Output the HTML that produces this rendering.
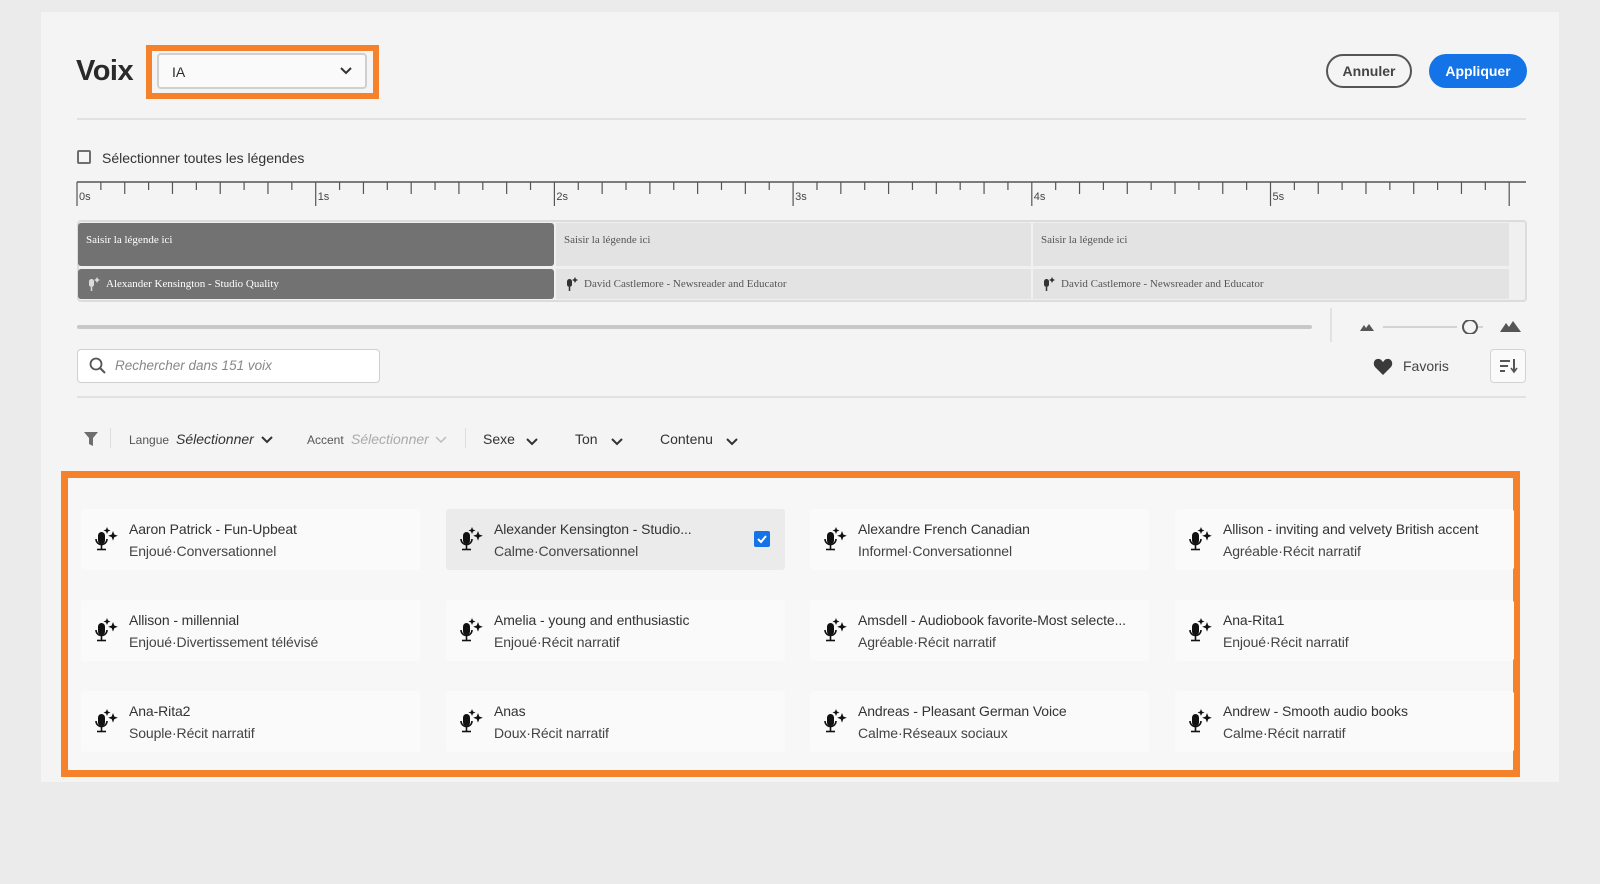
<!DOCTYPE html>
<html><head><meta charset="utf-8"><style>
*{box-sizing:border-box;margin:0;padding:0}
body{width:1600px;height:884px;background:#ebebeb;font-family:"Liberation Sans",sans-serif;color:#2c2c2c;position:relative;overflow:hidden}
.a{position:absolute}
.panel{left:41px;top:12px;width:1518px;height:770px;background:#f4f4f4}
.t{white-space:nowrap}
.seg{position:absolute;font-family:"Liberation Serif",serif;font-size:11px;padding-left:8px}
.card{position:absolute;width:339px;height:61px;background:#fafafa;border-radius:3px}
.card .n{position:absolute;left:48px;top:12px;font-size:14px;color:#333;white-space:nowrap;letter-spacing:-0.1px}
.card .s{position:absolute;left:48px;top:34px;font-size:14px;color:#444;white-space:nowrap;letter-spacing:-0.1px}
.card svg{position:absolute;left:14px;top:17px}
.chev{position:absolute}
</style></head><body>
<div class="a panel"></div>
<div class="a t" style="left:76px;top:55px;font-size:29px;font-weight:bold;color:#2a2a2a;letter-spacing:-0.5px">Voix</div>
<div class="a" style="left:146px;top:45px;width:233px;height:54px;border:6px solid #f5822a"></div>
<div class="a" style="left:157px;top:53px;width:210px;height:36px;background:#fafafa;border:2px solid #d0d0d0;border-radius:4px"></div>
<div class="a t" style="left:172px;top:64px;font-size:14px">IA</div>
<svg class="a" style="left:340px;top:67px" width="12" height="8"><path d="M1 1l5 5 5-5" stroke="#333" stroke-width="2" fill="none"/></svg>
<div class="a" style="left:1326px;top:54px;width:86px;height:34px;border:2px solid #555;border-radius:17px;font-size:14px;font-weight:bold;color:#444;text-align:center;line-height:30px">Annuler</div>
<div class="a" style="left:1429px;top:54px;width:98px;height:34px;background:#1473e6;border-radius:17px;font-size:14px;font-weight:bold;color:#fff;text-align:center;line-height:34px">Appliquer</div>
<div class="a" style="left:77px;top:118px;width:1449px;height:2px;background:#e1e1e1"></div>
<div class="a" style="left:77px;top:150px;width:14px;height:14px;border:2px solid #6e6e6e;border-radius:2px"></div>
<div class="a t" style="left:102px;top:150px;font-size:14px;color:#333">Sélectionner toutes les légendes</div>
<svg class="a" style="left:76px;top:178px" width="1452" height="30">
<line x1="1" y1="4" x2="1450" y2="4" stroke="#555" stroke-width="1.5"/>
<g stroke="#555" stroke-width="1.2" id="tk"></g>
</svg>
<div id="rl"></div>
<div class="a" style="left:77px;top:220px;width:1450px;height:82px;border:2px solid #dcdcdc;border-radius:4px;background:#f0f0f0"></div>
<div class="seg" style="left:78px;top:223px;width:476px;height:43px;background:#727272;color:#fff;padding-top:11px;border-radius:3px">Saisir la légende ici</div>
<div class="seg" style="left:556px;top:223px;width:475px;height:43px;background:#e3e3e3;color:#555;padding-top:11px">Saisir la légende ici</div>
<div class="seg" style="left:1033px;top:223px;width:476px;height:43px;background:#e3e3e3;color:#555;padding-top:11px">Saisir la légende ici</div>
<div class="seg" style="left:78px;top:269px;width:476px;height:30px;background:#727272;color:#fff;padding:9px 0 0 28px;border-radius:3px">Alexander Kensington - Studio Quality</div>
<div class="seg" style="left:556px;top:269px;width:475px;height:30px;background:#e3e3e3;color:#555;padding:9px 0 0 28px">David Castlemore - Newsreader and Educator</div>
<div class="seg" style="left:1033px;top:269px;width:476px;height:30px;background:#e3e3e3;color:#555;padding:9px 0 0 28px">David Castlemore - Newsreader and Educator</div>
<div class="a" style="left:77px;top:325px;width:1235px;height:4px;background:#c8c8c8;border-radius:2px"></div>
<div class="a" style="left:1330px;top:308px;width:2px;height:34px;background:#e2e2e2"></div>
<svg class="a" style="left:1360px;top:320px" width="175" height="14">
<path d="M0 11l4-6 2 3 3-4 5 7z" fill="#555"/>
<line x1="23" y1="7" x2="97" y2="7" stroke="#d3d3d3" stroke-width="2"/>
<line x1="118" y1="7" x2="123" y2="7" stroke="#d3d3d3" stroke-width="2"/>
<circle cx="110" cy="7" r="7" fill="#f4f4f4" stroke="#555" stroke-width="2"/>
<path d="M140 12l6-9 3 4 4-6 8 11z" fill="#555"/>
</svg>
<div class="a" style="left:77px;top:349px;width:303px;height:34px;background:#fff;border:1.5px solid #cfcfcf;border-radius:4px"></div>
<svg class="a" style="left:89px;top:357px" width="18" height="18"><circle cx="7" cy="7" r="5.5" stroke="#555" stroke-width="1.8" fill="none"/><line x1="11" y1="11" x2="16" y2="16" stroke="#555" stroke-width="2"/></svg>
<div class="a t" style="left:115px;top:358px;font-size:13.5px;font-style:italic;color:#888">Rechercher dans 151 voix</div>
<svg class="a" style="left:1373px;top:358px" width="20" height="18"><path d="M10 17L2 9C-1 5 2 0 6 1c2 0 3 2 4 3 1-1 2-3 4-3 4-1 7 4 4 8z" fill="#3a3a3a"/></svg>
<div class="a t" style="left:1403px;top:358px;font-size:14px;color:#444">Favoris</div>
<div class="a" style="left:1490px;top:349px;width:36px;height:34px;background:#fafafa;border:1.5px solid #d3d3d3;border-radius:4px"></div>
<svg class="a" style="left:1498px;top:358px" width="22" height="16"><g stroke="#555" stroke-width="2"><line x1="2" y1="3" x2="12" y2="3"/><line x1="2" y1="8" x2="10" y2="8"/><line x1="2" y1="13" x2="7" y2="13"/><line x1="16" y1="1" x2="16" y2="13"/></g><path d="M13 10l3 4 3-4" stroke="#555" stroke-width="1.6" fill="none"/></svg>
<div class="a" style="left:77px;top:396px;width:1449px;height:2px;background:#e1e1e1"></div>
<svg class="a" style="left:84px;top:432px" width="14" height="14"><path d="M0 0h14l-5 6v8l-4-2v-6z" fill="#6e6e6e"/></svg>
<div class="a" style="left:110px;top:428px;width:1px;height:20px;background:#ddd"></div>
<div class="a t" style="left:129px;top:433px;font-size:12px;color:#555">Langue</div>
<div class="a t" style="left:176px;top:431px;font-size:14px;font-style:italic;color:#333">Sélectionner</div>
<svg class="chev" style="left:261px;top:436px" width="12" height="8"><path d="M1 1l5 5 5-5" stroke="#333" stroke-width="2" fill="none"/></svg>
<div class="a t" style="left:307px;top:433px;font-size:12px;color:#555">Accent</div>
<div class="a t" style="left:351px;top:431px;font-size:14px;font-style:italic;color:#aaa">Sélectionner</div>
<svg class="chev" style="left:435px;top:436px" width="12" height="8"><path d="M1 1l5 5 5-5" stroke="#bbb" stroke-width="1.5" fill="none"/></svg>
<div class="a" style="left:465px;top:428px;width:1px;height:20px;background:#ddd"></div>
<div class="a t" style="left:483px;top:431px;font-size:14px;color:#333">Sexe</div>
<svg class="chev" style="left:526px;top:438px" width="12" height="8"><path d="M1 1l5 5 5-5" stroke="#333" stroke-width="2" fill="none"/></svg>
<div class="a t" style="left:575px;top:431px;font-size:14px;color:#333">Ton</div>
<svg class="chev" style="left:611px;top:438px" width="12" height="8"><path d="M1 1l5 5 5-5" stroke="#333" stroke-width="2" fill="none"/></svg>
<div class="a t" style="left:660px;top:431px;font-size:14px;color:#333">Contenu</div>
<svg class="chev" style="left:726px;top:438px" width="12" height="8"><path d="M1 1l5 5 5-5" stroke="#333" stroke-width="2" fill="none"/></svg>
<div class="a" style="left:61px;top:471px;width:1459px;height:306px;border:7px solid #f5822a;background:#f7f7f7"></div>
<div id="cards"></div>
<script>
var tk=document.getElementById('tk'),s='';
var step=238.7/10;
for(var i=0;i<=61;i++){var x=1+i*step;var h=(i%10==0)?24:(i%2==0?12:8);s+='<line x1="'+x+'" y1="4" x2="'+x+'" y2="'+(4+h)+'"/>';}
tk.innerHTML=s;
var rl='';['0s','1s','2s','3s','4s','5s'].forEach(function(l,i){rl+='<div class="a t" style="left:'+(79+i*238.7)+'px;top:191px;font-size:11px;color:#444">'+l+'</div>';});
document.getElementById('rl').innerHTML=rl;
var mic='<svg width="24" height="26" viewBox="0 0 24 26"><rect x="3" y="6" width="7" height="12" rx="3.5" fill="#111"/><path d="M1 13a5.5 5.5 0 0 0 11 0" stroke="#111" stroke-width="1.6" fill="none"/><line x1="6.5" y1="19" x2="6.5" y2="23" stroke="#111" stroke-width="1.6"/><line x1="2" y1="23.5" x2="11" y2="23.5" stroke="#111" stroke-width="1.6"/><path d="M12 1l1 2.5 2.5 1-2.5 1-1 2.5-1-2.5-2.5-1 2.5-1z" fill="#111"/><path d="M18 5l1.3 3.5 3.5 1.3-3.5 1.3-1.3 3.5-1.3-3.5-3.5-1.3 3.5-1.3z" fill="#111"/></svg>';
var d=[["Aaron Patrick - Fun-Upbeat","Enjoué·Conversationnel"],["Alexander Kensington - Studio...","Calme·Conversationnel"],["Alexandre French Canadian","Informel·Conversationnel"],["Allison - inviting and velvety British accent","Agréable·Récit narratif"],["Allison - millennial","Enjoué·Divertissement télévisé"],["Amelia - young and enthusiastic","Enjoué·Récit narratif"],["Amsdell - Audiobook favorite-Most selecte...","Agréable·Récit narratif"],["Ana-Rita1","Enjoué·Récit narratif"],["Ana-Rita2","Souple·Récit narratif"],["Anas","Doux·Récit narratif"],["Andreas - Pleasant German Voice","Calme·Réseaux sociaux"],["Andrew - Smooth audio books","Calme·Récit narratif"]];
var xs=[81,446,810,1175],ys=[509,600,691],h='';
d.forEach(function(c,i){var x=xs[i%4],y=ys[Math.floor(i/4)];h+='<div class="card" style="left:'+x+'px;top:'+y+'px;'+(i==1?'background:#ebebeb':'')+'">'+mic+'<div class="n">'+c[0]+'</div><div class="s">'+c[1]+'</div>'+(i==1?'<svg style="left:308px;top:22px" width="16" height="16"><rect width="16" height="16" rx="2" fill="#1473e6"/><path d="M4 8l3 3 5-6" stroke="#fff" stroke-width="2" fill="none"/></svg>':'')+'</div>';});
document.getElementById('cards').innerHTML=h;
</script>
<svg class="a" style="left:87px;top:276px" width="14" height="16"><rect x="2" y="3" width="5" height="8" rx="2.5" fill="#ddd"/><line x1="4.5" y1="11" x2="4.5" y2="15" stroke="#ddd" stroke-width="1.5"/><path d="M10 1l1 2 2 1-2 1-1 2-1-2-2-1 2-1z" fill="#ddd"/></svg>
<svg class="a" style="left:565px;top:276px" width="14" height="16"><rect x="2" y="3" width="5" height="8" rx="2.5" fill="#333"/><line x1="4.5" y1="11" x2="4.5" y2="15" stroke="#333" stroke-width="1.5"/><path d="M10 1l1 2 2 1-2 1-1 2-1-2-2-1 2-1z" fill="#333"/></svg>
<svg class="a" style="left:1042px;top:276px" width="14" height="16"><rect x="2" y="3" width="5" height="8" rx="2.5" fill="#333"/><line x1="4.5" y1="11" x2="4.5" y2="15" stroke="#333" stroke-width="1.5"/><path d="M10 1l1 2 2 1-2 1-1 2-1-2-2-1 2-1z" fill="#333"/></svg>
</body></html>
